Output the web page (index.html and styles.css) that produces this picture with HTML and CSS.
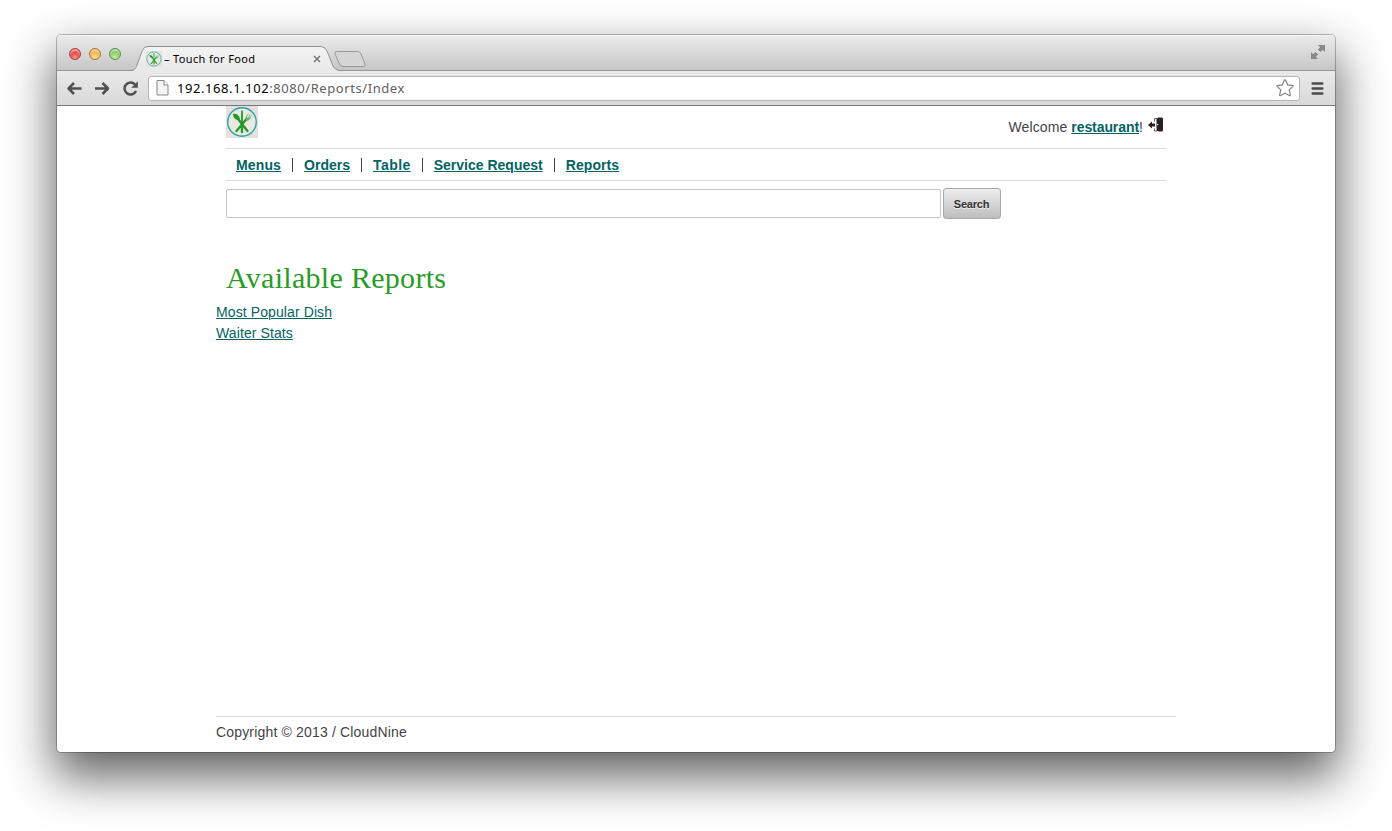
FILE: index.html
```html
<!DOCTYPE html>
<html lang="en">
<head>
<meta charset="utf-8">
<title>Touch for Food</title>
<link rel="stylesheet" href="styles.css">
</head>
<body>
<svg class="defs" width="0" height="0">
  <symbol id="logo" viewBox="0 0 32 32">
    <rect width="32" height="32" fill="#e6e1dd"/>
    <circle cx="16" cy="16" r="14.300" fill="#e9e8e3" stroke="#25a3a3" stroke-width="1.400"/>
    <g stroke="#239a2b" stroke-linecap="round" fill="none">
      <path d="M16 5.500V18" stroke-width="1.800"/>
      <path d="M16 18v8" stroke-width="2.400"/>
      <path d="M12 13l9.500 12" stroke-width="2.300"/>
      <path d="M20.500 13L10.500 25" stroke-width="2.300"/>
      <path d="M20 11.500q-1 2 1 2.800q2.500 0 3.200-2.500" fill="#66b765" stroke="#66b765" stroke-width="1"/>
      <path d="M20.300 10.900l1.800-2.700M22.200 11.700l2-3M23.800 12.500l1.500-2.500" stroke="#66b765" stroke-width=".9"/>
    </g>
    <path d="M7 8c3-.8 6.500 1 7 5.800c-3.800 1.200-7-1.800-7-5.800z" fill="#239a2b"/>
  </symbol>
</svg>
<div class="window">
  <div class="titlebar">
    <div class="lights"><i class="light red"></i><i class="light amber"></i><i class="light green"></i></div>
    <div class="tab">
      <svg class="tab-shape" width="240" height="26" viewBox="0 0 240 26"><defs><linearGradient id="tg" x2="0" y2="1"><stop stop-color="#f3f3f3"/><stop offset="1" stop-color="#e8e8e8"/></linearGradient></defs><path d="M0 24.500C2 24 3 22 4 19L9.500 4Q11 .5 15 .5H188Q192 .5 194 5L200 20Q202 24 206 24.500V26H0z" fill="url(#tg)"/><path d="M-3 24.500C1 24.500 2.500 23 4 19L9.500 4Q11 .5 15 .5H188Q192 .5 194 5L200 20Q202 24 206 24.500" fill="none" stroke="#929292"/><path d="M202 8Q201.300 5.500 203.500 5.500H224.500Q227 5.500 228 8L232 18Q233 20.500 230.500 20.500H210Q207.500 20.500 206.500 18z" fill="#d6d6d6" stroke="#989898"/></svg>
      <div class="tab-content"><svg class="favicon"><use href="#logo"/></svg><span class="tab-title">– Touch for Food</span><svg class="close" width="8" height="8"><path d="M1 1l6 6M7 1L1 7" stroke="#777" stroke-width="1.500"/></svg></div>
    </div>
    <svg class="expand" width="16" height="16" viewBox="0 0 16 16"><path d="M8 1h7v7l-2.200-2.200-2.300 2.300-2.600-2.600 2.300-2.300zM1 8l2.200 2.200 2.300-2.300 2.600 2.600-2.300 2.300L8 15H1z" fill="#888"/></svg>
  </div>
  <div class="toolbar">
    <svg class="arrow" width="16" height="14" viewBox="0 0 16 14"><path d="M15.500 7.500H2.500M8 2L2.500 7.500 8 13" fill="none" stroke="#505050" stroke-width="2.500" stroke-linejoin="round"/></svg>
    <svg class="arrow" width="16" height="14" viewBox="0 0 16 14"><path d="M1 7.500h13M8.500 2L14 7.500 8.500 13" fill="none" stroke="#505050" stroke-width="2.500" stroke-linejoin="round"/></svg>
    <svg class="reload" width="16" height="16" viewBox="0 0 16 16"><path d="M14 11A6 6 0 1 1 13 4.500" fill="none" stroke="#505050" stroke-width="2.500"/><path d="M15.800 1.300v6.500H9.300z" fill="#505050"/></svg>
    <div class="address">
      <svg width="13" height="16" viewBox="0 0 13 16"><path d="M1 .5h7l4 4.500v10H1z" fill="#f4f4f4" stroke="#888"/><path d="M8 .5V5h4" fill="#fff" stroke="#888"/></svg>
      <span class="url"><b>192.168.1.102</b>:8080/Reports/Index</span>
      <svg class="star" width="20" height="20" viewBox="0 0 20 20"><path d="M10 2q.7 0 1 .8l1.700 4.200 4.600.4q1.300.2.400 1.200l-3.500 3.300 1.100 4.800q.2 1.300-1 .8L10 15.200l-4.300 2.300q-1.200.5-1-.8l1.100-4.800-3.500-3.300q-.9-1 .4-1.200l4.600-.4L9 2.800q.3-.8 1-.8z" fill="#fff" stroke="#888" stroke-width="1.300" stroke-linejoin="round"/></svg>
    </div>
    <svg class="menu" width="14" height="14" viewBox="0 0 14 14"><path d="M1.700 2.500h9.600M1.700 7.500h9.600M1.700 12.500h9.600" stroke="#4b4b4b" stroke-width="2.500" stroke-linecap="round"/></svg>
  </div>
  <div class="page">
    <header class="header">
      <svg class="logo"><use href="#logo"/></svg>
      <div class="welcome"><span>Welcome <a href="#" class="user">restaurant</a>!</span><svg width="16" height="16" viewBox="0 0 16 16"><path d="M6.500 4.500V1.500H9M6.500 11.500v2.500H9" fill="none" stroke="#655f5e"/><path d="M8.500 2L10 .5h4l1 1v12l-1 1h-3l-2.500-1z" fill="#29201f"/><path d="M0 8l4-3.500v2h3v3H4v2z" fill="#29201f"/><circle cx="9.700" cy="7.500" r=".7" fill="#fff"/></svg></div>
    </header>
    <nav class="nav"><a href="#">Menus</a><a href="#">Orders</a><a href="#">Table</a><a href="#">Service Request</a><a href="#">Reports</a></nav>
    <div class="search"><div class="field"></div><button class="button">Search</button></div>
    <h1 class="heading">Available Reports</h1>
    <div class="reports"><a href="#">Most Popular Dish</a><a href="#">Waiter Stats</a></div>
    <footer class="footer">Copyright © 2013 / CloudNine</footer>
  </div>
</div>
</body>
</html>
```
FILE: styles.css
```css
* { box-sizing: border-box; }
body { margin: 0; width: 1392px; height: 831px; overflow: hidden; padding: 35px 57px; background: #fff; font: 14px/21px "Liberation Sans", Arial, sans-serif; color: #444; }
.defs { position: absolute; }
svg { display: block; flex: none; }
.window { width: 1278px; height: 717px; display: flex; flex-direction: column; background: #fff; border-radius: 4px; overflow: hidden; box-shadow: 0 0 0 1px rgba(0,0,0,.25), 0 22px 48px 3px rgba(0,0,0,.62); }
.titlebar { height: 36px; flex: none; display: flex; background: linear-gradient(#eaeaea, #c6c6c6); border-top: 1px solid #f6f6f6; border-bottom: 1px solid #969696; }
.lights { display: flex; gap: 8px; padding: 12px 0 0 12px; width: 76px; flex: none; }
.light { width: 12px; height: 12px; border-radius: 50%; }
.red { background: radial-gradient(circle at 50% 85%, #ff9c91, #e74b4b 45%, #c5343a 80%); border: 1px solid #a33e3e; box-shadow: inset 0 2px 2px #f8b6b0; }
.amber { background: radial-gradient(circle at 50% 85%, #ffe88b, #eeb04b 55%, #cc8430); border: 1px solid #a57531; box-shadow: inset 0 2px 2px #fadcaa; }
.green { background: radial-gradient(circle at 50% 85%, #c8f3a0, #83c569 55%, #529c45); border: 1px solid #5a8f4c; box-shadow: inset 0 2px 2px #cae9bd; }
.tab { width: 240px; height: 26px; margin-top: 10px; display: grid; }
.tab-shape, .tab-content { grid-area: 1 / 1; }
.tab-shape { overflow: visible; }
.tab-content { display: flex; align-items: center; padding: 0 0 1px 13px; z-index: 1; }
.favicon { width: 16px; height: 16px; }
.tab-title { width: 151px; padding-left: 2px; font: 11px "Noto Sans", sans-serif; color: #000; letter-spacing: .35px; white-space: nowrap; }
.expand { margin: 8px 9px 0 auto; }
.toolbar { height: 35px; flex: none; display: flex; align-items: center; padding: 0 9px; background: linear-gradient(#e9e9e9, #d9d9d9); border-bottom: 1px solid #777; }
.arrow { margin-right: 12px; }
.address { width: 1152px; height: 25px; margin-left: 10px; display: flex; align-items: center; background: #fff; border: 1px solid #b4b4b4; border-radius: 3px; padding: 0 4px 0 7px; }
.url { font: 13px "Noto Sans", sans-serif; color: #606060; margin-left: 8px; letter-spacing: .57px; }
.url b { font-weight: 400; color: #000; }
.star { margin-left: auto; }
.menu { margin-left: 11px; }
.page { flex: 1; width: 960px; margin: 0 auto; display: flex; flex-direction: column; }
.header { height: 43px; margin: 0 10px; border-bottom: 1px solid #ddd; display: flex; justify-content: space-between; }
.logo { width: 32px; height: 32px; }
.welcome { display: flex; gap: 5px; padding: 11px 2px 0 0; letter-spacing: .1px; }
a { color: #056363; text-underline-offset: 1px; text-decoration-thickness: 1px; }
.user { font-weight: 700; letter-spacing: -.08px; }
.nav { height: 32px; margin: 0 10px; border-bottom: 1px solid #ddd; display: flex; align-items: center; }
.nav a { font-weight: 700; line-height: 14px; padding: 0 11px 0 10px; }
.nav a:first-child { letter-spacing: .14px; }
.nav a + a { padding-left: 11px; border-left: 1px solid #444; }
.nav a:nth-child(3) { letter-spacing: .45px; }
.nav a:nth-child(5) { letter-spacing: .08px; }
.search { margin: 7px 10px 0; display: flex; gap: 2px; align-items: center; }
.field { width: 715px; height: 29px; border: 1px solid #c4c4c4; border-radius: 2px; }
.button { width: 58px; height: 31px; padding: 0 1px 0 0; border: 1px solid #aaa; border-radius: 3px; background: linear-gradient(#eee, #bebebe); color: #333; font: 700 11px "Liberation Sans", Arial, sans-serif; letter-spacing: -.2px; text-shadow: 0 1px #eee; }
.heading { margin: 41px 10px 0; height: 42px; font: 400 30px/36px "Liberation Serif", Georgia, serif; letter-spacing: .3px; color: #299b27; white-space: nowrap; }
.reports { display: flex; flex-direction: column; align-items: flex-start; letter-spacing: .1px; }
.footer { margin-top: auto; height: 36px; border-top: 1px solid #ddd; padding-top: 5px; letter-spacing: .17px; }
```
